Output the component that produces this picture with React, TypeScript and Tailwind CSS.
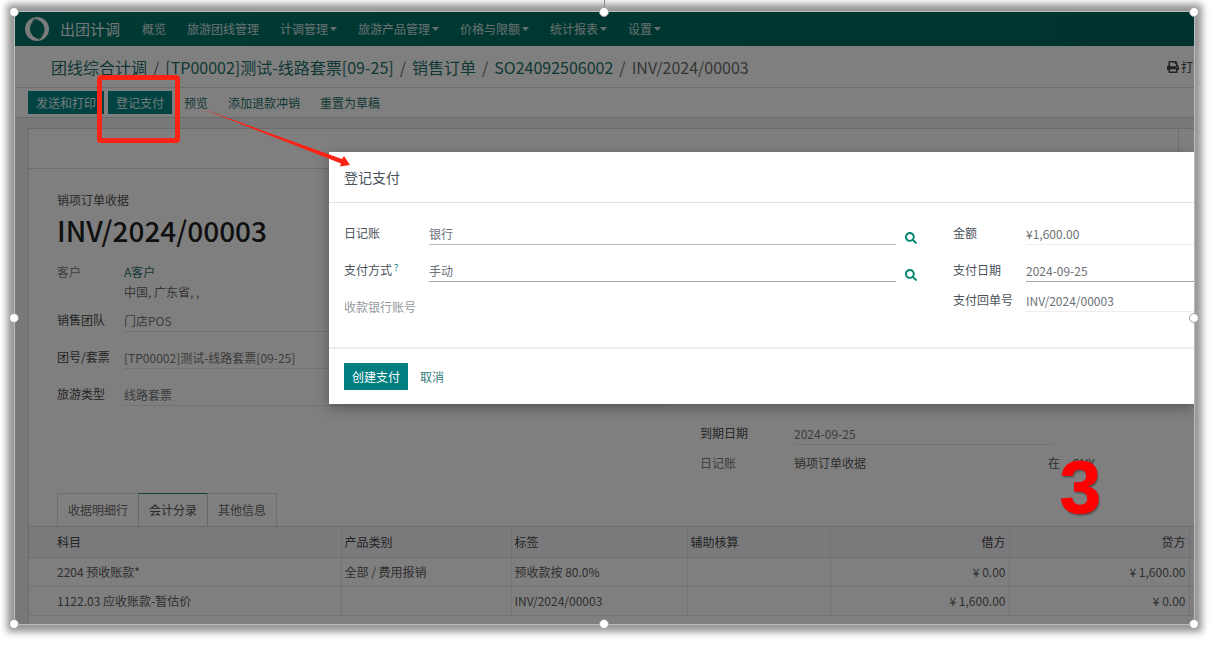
import { FaPrint, FaSearch } from 'react-icons/fa'

const menus = [
  { label: '概览', caret: false },
  { label: '旅游团线管理', caret: false },
  { label: '计调管理', caret: true },
  { label: '旅游产品管理', caret: true },
  { label: '价格与限额', caret: true },
  { label: '统计报表', caret: true },
  { label: '设置', caret: true },
]

const crumbs = ['团线综合计调', '[TP00002]测试-线路套票[09-25]', '销售订单', 'SO24092506002']

const tabs = ['收据明细行', '会计分录', '其他信息']

const entries = [
  { account: '2204 预收账款*', category: '全部 / 费用报销', label: '预收款按 80.0%', debit: '¥ 0.00', credit: '¥ 1,600.00' },
  { account: '1122.03 应收账款-暂估价', category: '', label: 'INV/2024/00003', debit: '¥ 1,600.00', credit: '¥ 0.00' },
]

const handles = [
  '-left-[6px] -top-[5px]',
  'left-1/2 -ml-[6px] -top-[5px]',
  '-right-[5px] -top-[5px]',
  '-left-[6px] top-1/2 -mt-[5px]',
  '-right-[5px] top-1/2 -mt-[5px]',
  '-left-[6px] -bottom-[5px]',
  'left-1/2 -ml-[6px] -bottom-[5px]',
  '-right-[5px] -bottom-[5px]',
]

const Navbar = () => (
  <nav className="flex h-[34px] items-center bg-linear-to-r from-[#027468] to-[#00665a] pl-[10px] text-white">
    <svg viewBox="0 0 24 24" className="mr-[11px] size-6 shrink-0" aria-hidden="true">
      <path
        fill="#f4f6f6"
        fillRule="evenodd"
        d="M12 0a12 12 0 1 0 0 24a12 12 0 0 0 0-24ZM10.500 2C16 3.500 20 8 19.500 13C19 17.500 17 20.500 13.500 22C8 20.500 4.500 16 5 11C5.500 6.500 8 3.500 10.500 2Z"
      />
      <path fill="none" stroke="#4f9a92" strokeWidth="1" d="M10 1C7 3.500 8 5 7 8M14 23C17 20.500 16 19 17.500 16" />
    </svg>
    <a href="#" className="mr-[22px] text-[15px] text-white/90">
      出团计调
    </a>
    <ul className="flex gap-[21px] text-xs">
      {menus.map((menu) => (
        <li key={menu.label}>
          <button className="flex items-center gap-[2px] text-white/80">
            {menu.label}
            {menu.caret && (
              <svg viewBox="0 0 7 4" className="h-1 w-[7px]" aria-hidden="true">
                <path d="M0 0h7L3.500 4Z" fill="currentColor" />
              </svg>
            )}
          </button>
        </li>
      ))}
    </ul>
  </nav>
)

const Breadcrumb = () => (
  <div className="flex h-[42px] items-center justify-between border-b border-[#dcdce0] pl-9">
    <ol className="flex gap-[6px] text-base text-[#6c6c6c]">
      {crumbs.map((crumb) => (
        <li key={crumb} className="flex gap-[6px]">
          <a href="#" className="text-[#1f706b]">
            {crumb}
          </a>
          <span>/</span>
        </li>
      ))}
      <li>INV/2024/00003</li>
    </ol>
    <button className="flex items-center gap-[2px] pr-px text-xs text-[#444]">
      <FaPrint className="size-3" />打
    </button>
  </div>
)

const ActionBar = () => (
  <div className="flex h-[30px] items-center gap-1 border-b border-[#d6d6da] pl-[13px] text-xs">
    <button className="h-[23px] bg-[#008784] px-2 text-white/90">发送和打印</button>
    <button className="h-[23px] bg-[#008784] px-2 text-white/90">登记支付</button>
    <button className="h-[23px] px-2 text-[#1f706b]">预览</button>
    <button className="h-[23px] px-2 text-[#1f706b]">添加退款冲销</button>
    <button className="h-[23px] px-2 text-[#1f706b]">重置为草稿</button>
  </div>
)

type SheetFieldProps = {
  id: string
  label: string
  value: string
}

const SheetField = ({ id, label, value }: SheetFieldProps) => (
  <div className="flex h-[22px]">
    <label htmlFor={id} className="w-[67px] shrink-0 leading-5 text-[#4a4a4a]">
      {label}
    </label>
    <input id={id} defaultValue={value} className="min-w-0 flex-1 border-b border-[#e6e6e6] text-[#777] outline-none" />
  </div>
)

const InvoiceHeader = () => (
  <div className="pl-7 pt-[21px] text-xs">
    <p className="leading-5 text-[#555]">销项订单收据</p>
    <h1 className="text-[28px] font-medium leading-10 text-[#1f1f1f]">INV/2024/00003</h1>
    <div className="mt-3 flex min-h-[211px] gap-8">
      <div className="flex flex-1 flex-col gap-[15px]">
        <div className="-mb-[7px] flex leading-5">
          <span className="w-[67px] text-[#808080]">客户</span>
          <div>
            <a href="#" className="block text-[#1f706b]">
              A客户
            </a>
            <span className="text-[#6c6c6c]">中国, 广东省, ,</span>
          </div>
        </div>
        <SheetField id="team" label="销售团队" value="门店POS" />
        <SheetField id="tour" label="团号/套票" value="[TP00002]测试-线路套票[09-25]" />
        <SheetField id="type" label="旅游类型" value="线路套票" />
      </div>
      <div className="flex w-[494px] flex-col justify-end gap-2">
        <div className="flex h-[22px]">
          <label htmlFor="due" className="w-[94px] leading-5 text-[#4a4a4a]">
            到期日期
          </label>
          <input id="due" defaultValue="2024-09-25" className="w-[259px] border-b border-[#e6e6e6] text-[#777] outline-none" />
        </div>
        <div className="flex leading-5 text-[#5c5c5c]">
          <span className="w-[94px] text-[#808080]">日记账</span>
          <span className="w-[254px]">销项订单收据</span>
          <span className="w-6">在</span>
          <span>CNY</span>
        </div>
      </div>
    </div>
  </div>
)

const Notebook = () => (
  <>
    <div role="tablist" className="mt-5 flex h-[33px] pl-7 text-xs">
      {tabs.map((tab, i) => (
        <button
          key={tab}
          role="tab"
          aria-selected={i === 1}
          className={
            i === 1
              ? 'border border-b-0 border-[#cfd0d4] border-t-[#2f7f7a] px-[10px] text-[#555]'
              : 'border-x border-t border-[#dcdde0] px-[10px] text-[#6c6c6c] first:border-r-0 last:border-l-0'
          }
        >
          {tab}
        </button>
      ))}
    </div>
    <table className="w-full table-fixed border-collapse text-xs text-[#606060]">
      <colgroup>
        <col />
        <col className="w-[170px]" />
        <col className="w-[176px]" />
        <col className="w-[143px]" />
        <col className="w-[179px]" />
        <col className="w-[180px]" />
        <col className="w-[5px]" />
      </colgroup>
      <thead>
        <tr className="h-[31px] border-y border-[#dcdce2] bg-[#f4f4f8] text-left text-[#484848]">
          <th className="border-r border-[#e2e2e7] pl-7 font-normal">科目</th>
          <th className="border-r border-[#e2e2e7] pl-[3px] font-normal">产品类别</th>
          <th className="border-r border-[#e2e2e7] pl-[3px] font-normal">标签</th>
          <th className="border-r border-[#e2e2e7] pl-[3px] font-normal">辅助核算</th>
          <th className="border-r border-[#e2e2e7] pr-[3px] text-right font-normal">借方</th>
          <th className="border-r border-[#e2e2e7] pr-[3px] text-right font-normal">贷方</th>
          <th></th>
        </tr>
      </thead>
      <tbody>
        {entries.map((entry) => (
          <tr key={entry.account} className="h-[29px] border-b border-[#e6e6ea]">
            <td className="border-r border-[#e6e6ea] pl-7">{entry.account}</td>
            <td className="border-r border-[#e6e6ea] pl-[3px]">{entry.category}</td>
            <td className="border-r border-[#e6e6ea] pl-[3px]">{entry.label}</td>
            <td className="border-r border-[#e6e6ea]"></td>
            <td className="border-r border-[#e6e6ea] pr-[3px] text-right">{entry.debit}</td>
            <td className="border-r border-[#e6e6ea] pr-[3px] text-right">{entry.credit}</td>
            <td></td>
          </tr>
        ))}
      </tbody>
    </table>
  </>
)

const PaymentDialog = () => (
  <div
    role="dialog"
    aria-labelledby="dialog-title"
    className="absolute left-[314px] right-0 top-[140px] bg-white text-xs text-[#4a515b] shadow-[0_4px_12px_rgba(0,0,0,0.3)]"
  >
    <h2 id="dialog-title" className="border-b border-[#dee2e6] px-[15px] text-sm leading-[50px]">
      登记支付
    </h2>
    <div className="flex gap-9 border-b-2 border-[#ebedee] pb-7 pl-[15px] pt-5">
      <div className="flex flex-1 flex-col gap-[15px]">
        <div className="flex h-[22px]">
          <label htmlFor="journal" className="w-[85px] leading-5">
            日记账
          </label>
          <input id="journal" defaultValue="银行" className="min-w-0 flex-1 border-b border-[#b4babb] text-[#6c7178] outline-none" />
          <button aria-label="搜索日记账" className="flex w-[21px] items-end justify-end pb-px text-[#018770]">
            <FaSearch className="size-3" />
          </button>
        </div>
        <div className="flex h-[22px]">
          <label htmlFor="method" className="w-[85px] leading-5">
            支付方式
            <sup className="ml-[2px] text-[9px] text-[#017e84]">?</sup>
          </label>
          <input id="method" defaultValue="手动" className="min-w-0 flex-1 border-b border-[#a4aab2] text-[#6c7178] outline-none" />
          <button aria-label="搜索支付方式" className="flex w-[21px] items-end justify-end pb-px text-[#018770]">
            <FaSearch className="size-3" />
          </button>
        </div>
        <p className="h-[22px] leading-5 text-[#94989e]">收款银行账号</p>
      </div>
      <div className="flex w-[241px] flex-col">
        <div className="flex h-[22px]">
          <label htmlFor="amount" className="w-[73px] leading-5">
            金额
          </label>
          <input id="amount" defaultValue="¥1,600.00" className="min-w-0 flex-1 border-b border-[#ededf0] text-[#6c7178] outline-none" />
        </div>
        <div className="mt-[15px] flex h-[22px]">
          <label htmlFor="date" className="w-[73px] leading-5">
            支付日期
          </label>
          <input id="date" defaultValue="2024-09-25" className="min-w-0 flex-1 border-b border-[#a4aaac] text-[#6c7178] outline-none" />
        </div>
        <div className="mt-2 flex h-[22px]">
          <label htmlFor="memo" className="w-[73px] leading-5">
            支付回单号
          </label>
          <input id="memo" defaultValue="INV/2024/00003" className="min-w-0 flex-1 border-b border-[#ededf0] text-[#6c7178] outline-none" />
        </div>
      </div>
    </div>
    <div className="flex gap-1 px-[15px] py-[14px]">
      <button className="h-[27px] bg-[#017e80] px-2 text-white">创建支付</button>
      <button className="h-[27px] px-2 text-[#2f7a77]">取消</button>
    </div>
  </div>
)

const Annotations = () => (
  <>
    <div className="absolute left-[82px] top-[63px] h-[68px] w-[83px] rounded border-5 border-[#fb2314]" />
    <svg viewBox="0 0 152 60" className="absolute left-[185px] top-[96px] h-[60px] w-[152px]" aria-hidden="true">
      <path d="M0 0L142 51L144 48L150 57L140 58.500L141 55.500Z" fill="#fb2314" />
    </svg>
    <span className="absolute right-[93px] top-[438px] font-['Liberation_Sans',sans-serif] text-[74px] font-bold leading-[76px] text-[#fe0000] [-webkit-text-stroke:1px_#fe0000] [text-shadow:1px_2px_2px_rgba(0,0,0,0.4)]">
      3
    </span>
  </>
)

export default function App() {
  return (
    <div className="bg-white pb-[21px] pl-[15px] pr-[22px] pt-3 font-['Noto_Sans_CJK_SC',sans-serif]">
      <div className="relative shadow-[0_0_0_1px_#b9bfbe,0_0_7px_8px_#969696]">
        <div className="absolute -top-3 left-1/2 -ml-px h-3 w-px bg-[#7d8c8c]" />
        <div className="relative overflow-hidden bg-white">
          <Navbar />
          <Breadcrumb />
          <ActionBar />
          <main className="bg-[#f0f0f4] pl-[13px] pt-[10px]">
            <section className="border-l border-t border-[#d8d8dc] bg-white pb-2">
              <div className="flex h-10 justify-end border-b border-[#dcdce0]">
                <div className="w-4 border-l border-[#dcdce0]" />
              </div>
              <InvoiceHeader />
              <Notebook />
            </section>
          </main>
          <div className="absolute inset-0 bg-black/50" />
          <PaymentDialog />
          <Annotations />
        </div>
        {handles.map((pos) => (
          <span key={pos} className={`absolute size-[10px] rounded-full border border-[#a0a0a0] bg-white ${pos}`} />
        ))}
      </div>
    </div>
  )
}
